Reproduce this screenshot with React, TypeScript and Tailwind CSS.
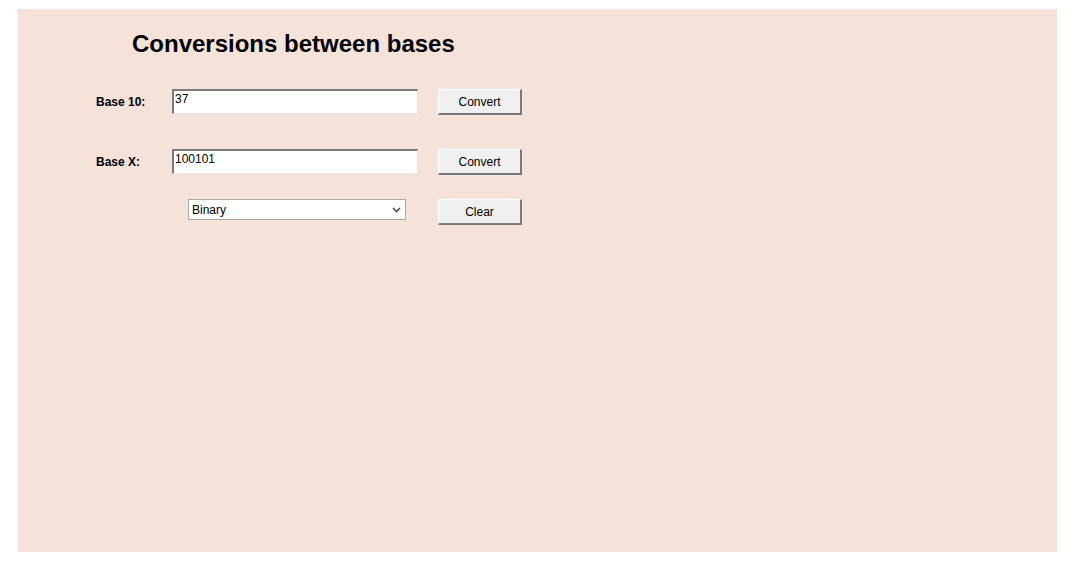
import { useState } from 'react';

const font = { fontFamily: '"Liberation Sans", Arial, sans-serif' };

function Btn({ label, onClick }: { label: string; onClick?: () => void }) {
  return (
    <button
      type="button"
      onClick={onClick}
      className="block box-border w-[84px] h-[26px] bg-[#f0f0f0] text-[12px] text-black border-t border-l border-t-white border-l-white border-b-2 border-r-2 border-b-[#7a7a7a] border-r-[#7a7a7a] leading-none"
    >
      {label}
    </button>
  );
}

function Field({ value, onChange }: { value: string; onChange: (v: string) => void }) {
  return (
    <input
      value={value}
      onChange={(e) => onChange(e.target.value)}
      className="block box-border w-[246px] h-[25px] bg-white text-[12px] leading-[14px] text-black pl-[1px] pt-[1px] pb-[7px] outline-none border-t-2 border-l-2 border-t-[#7a7a7a] border-l-[#7a7a7a] border-b border-r border-b-[#e6e6e6] border-r-[#e6e6e6]"
    />
  );
}

export default function App() {
  const [dec, setDec] = useState('37');
  const [other, setOther] = useState('100101');
  const [base, setBase] = useState('2');

  const toBaseX = () => {
    const n = parseInt(dec, 10);
    if (!isNaN(n)) setOther(n.toString(parseInt(base, 10)).toUpperCase());
  };
  const toBase10 = () => {
    const n = parseInt(other, parseInt(base, 10));
    if (!isNaN(n)) setDec(String(n));
  };

  return (
    <div className="min-h-[561px] bg-white pl-[18px] pt-[9px]" style={font}>
      <div className="w-[1039px] h-[543px] bg-[#f5e2d9] flex flex-col">
        <h1 className="ml-[114px] mt-[21px] text-[24px] leading-[28px] font-bold text-black">
          Conversions between bases
        </h1>

        <div className="ml-[78px] mt-[31px] flex items-start">
          <span className="self-center w-[76px] text-[12px] font-bold text-black">Base 10:</span>
          <Field value={dec} onChange={setDec} />
          <div className="ml-[20px]">
            <Btn label="Convert" onClick={toBaseX} />
          </div>
        </div>

        <div className="ml-[78px] mt-[34px] flex items-start">
          <span className="self-center w-[76px] text-[12px] font-bold text-black">Base X:</span>
          <Field value={other} onChange={setOther} />
          <div className="ml-[20px]">
            <Btn label="Convert" onClick={toBase10} />
          </div>
        </div>

        <div className="ml-[170px] mt-[24px] flex items-start">
          <div className="relative w-[218px] h-[21px]">
            <select
              value={base}
              onChange={(e) => setBase(e.target.value)}
              className="block appearance-none box-border w-full h-full bg-white border border-[#a9a9a9] text-[12px] text-black pl-[3px] outline-none"
            >
              <option value="2">Binary</option>
              <option value="8">Octal</option>
              <option value="16">Hexadecimal</option>
            </select>
            <svg
              className="absolute right-[5px] top-[8px] pointer-events-none"
              width="9"
              height="6"
              viewBox="0 0 9 6"
            >
              <path d="M1 1 L4.5 4.5 L8 1" fill="none" stroke="#505050" strokeWidth="1.6" />
            </svg>
          </div>
          <div className="ml-[32px]">
            <Btn
              label="Clear"
              onClick={() => {
                setDec('');
                setOther('');
              }}
            />
          </div>
        </div>
      </div>
    </div>
  );
}
